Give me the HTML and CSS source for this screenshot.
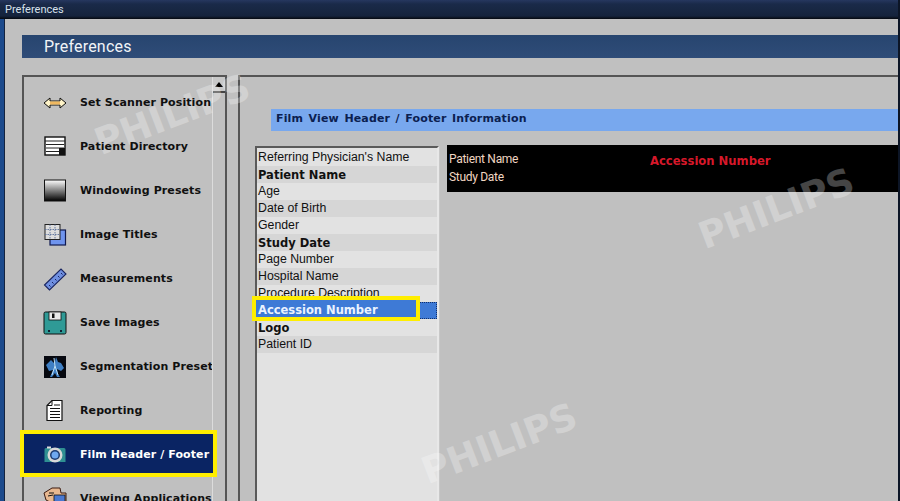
FILE: index.html
```html
<!DOCTYPE html>
<html lang="en">
<head>
<meta charset="utf-8">
<title>Preferences</title>
<link rel="stylesheet" href="styles.css">
</head>
<body>
<div class="window">
  <div class="titlebar">Preferences</div>
  <div class="client">
    <div class="banner">Preferences</div>
    <div class="panels">
      <aside class="nav">
        <ul class="nav-list">
          <li class="nav-item"><svg class="icon" viewBox="0 0 24 24"><path d="M1 12 7 7v3h10V7l6 5-6 5v-3H7v3z" fill="#fff4c8" stroke="#111" stroke-width="1"/><rect x="7" y="10.500" width="10" height="3" fill="#f0b860"/></svg><span>Set Scanner Position</span></li>
          <li class="nav-item"><svg class="icon" viewBox="0 0 24 24"><rect x="2" y="2" width="20" height="18" fill="#fff" stroke="#111" stroke-width="1.400"/><path d="M2 6h20M3 9.500h18M3 13h18M3 16.500h13" stroke="#222" stroke-width="1.200"/><rect x="16" y="13" width="6" height="7" fill="#111"/></svg><span>Patient Directory</span></li>
          <li class="nav-item"><svg class="icon" viewBox="0 0 24 24"><defs><linearGradient id="grad" x1="0" y1="0" x2="0" y2="1"><stop offset="0" stop-color="#fff"/><stop offset="1" stop-color="#000"/></linearGradient></defs><rect x="1.500" y="1" width="21" height="21" fill="url(#grad)" stroke="#111"/></svg><span>Windowing Presets</span></li>
          <li class="nav-item"><svg class="icon" viewBox="0 0 24 24"><rect x="7" y="7" width="15.500" height="15" fill="#6f94ee" stroke="#101a50" stroke-width="1.200"/><rect x="2" y="1.500" width="15" height="15" fill="#ddd" stroke="#222" stroke-width="1"/><path d="M2 6.500h15M2 11.500h15M7 1.500v15M12 1.500v15" stroke="#5a6f9a" stroke-width=".9" stroke-dasharray="1.500 1"/></svg><span>Image Titles</span></li>
          <li class="nav-item"><svg class="icon" viewBox="0 0 24 24"><path d="M1.500 18 18 2l5 5L6.500 23z" fill="#6f8fe0" stroke="#1a2560" stroke-width="1.100"/><path d="M6 18l1.500 1.500M9 15l1.500 1.500M12 12l1.500 1.500M15 9l1.500 1.500M18 6l1.500 1.500" stroke="#1a2560" stroke-width="1"/></svg><span>Measurements</span></li>
          <li class="nav-item"><svg class="icon" viewBox="0 0 24 24"><path d="M2.500 1h19a1.500 1.500 0 0 1 1.500 1.500v19a1.500 1.500 0 0 1-1.500 1.500h-19A1.500 1.500 0 0 1 1 21.500v-19A1.500 1.500 0 0 1 2.500 1z" fill="#2f9a96" stroke="#111"/><rect x="6" y="1" width="12" height="8" fill="#e8e8e8" stroke="#111" stroke-width=".8"/><rect x="9" y="2.500" width="2.500" height="4.500" fill="#111"/><rect x="5" y="19" width="2" height="2" fill="#123"/><rect x="17" y="19" width="2" height="2" fill="#123"/></svg><span>Save Images</span></li>
          <li class="nav-item"><svg class="icon" viewBox="0 0 24 24"><rect x="1" y="1" width="22" height="22" fill="#06080f"/><path d="M3 10 8 5l3 3 1-1 1-5 2 5 3 1 3 5-3 3-4-2 1 5 2 3h-3l-2-4-3 4H7l3-7-4 1z" fill="#3f7fc4"/><path d="M11 3l1 8-3 9M12 11l3 9" stroke="#bfe0f5" stroke-width="1" fill="none"/></svg><span>Segmentation Preset</span></li>
          <li class="nav-item"><svg class="icon" viewBox="0 0 24 24"><path d="M9 1.500h10v20H4V6.500z" fill="#fff" stroke="#111" stroke-width="1.200"/><path d="M9 1.500v5H4" fill="none" stroke="#111"/><path d="M11 6h6M7 9.500h10M7 12.500h10M7 15.500h10M7 18.500h10" stroke="#111" stroke-width="1"/></svg><span>Reporting</span></li>
          <li class="nav-item is-active"><svg class="icon" viewBox="0 0 24 24"><path d="M3 5h18a1.500 1.500 0 0 1 1.500 1.500V19H1.500V6.500A1.500 1.500 0 0 1 3 5z" fill="#2f8f92"/><rect x="4" y="3.500" width="4" height="2" fill="#ddd"/><circle cx="12" cy="12" r="7.500" fill="#d8d8d8"/><circle cx="12" cy="12" r="5" fill="#1c3a70"/><circle cx="12" cy="12" r="3.500" fill="#6fa8f0"/></svg><span>Film Header / Footer</span></li>
          <li class="nav-item"><svg class="icon" viewBox="0 0 24 24"><path d="M1 6 9 1h8l1 5 5 0v15H7v-6L3 13z" fill="#e8b890" stroke="#3b1a10" stroke-width="1"/><rect x="11" y="8" width="11" height="13" fill="#4a78d0" stroke="#111" stroke-width=".8"/><path d="M6 6l5 0M5 9l5-1" stroke="#111"/></svg><span>Viewing Applications</span></li>
        </ul>
        <div class="scrollbar"><button class="scroll-up" type="button" aria-label="Scroll up"></button></div>
      </aside>
      <main class="content">
        <h2 class="section-bar">Film View Header / Footer Information</h2>
        <div class="editor">
          <ul class="fields">
            <li class="field">Referring Physician's Name</li>
            <li class="field is-on">Patient Name</li>
            <li class="field">Age</li>
            <li class="field">Date of Birth</li>
            <li class="field">Gender</li>
            <li class="field is-on">Study Date</li>
            <li class="field">Page Number</li>
            <li class="field">Hospital Name</li>
            <li class="field">Procedure Description</li>
            <li class="field is-selected"><span class="field-mark">Accession Number</span></li>
            <li class="field is-on">Logo</li>
            <li class="field">Patient ID</li>
          </ul>
          <div class="preview">
            <div class="film-head">
              <div class="film-left"><div>Patient Name</div><div>Study Date</div></div>
              <div class="film-center">Accession Number</div>
            </div>
          </div>
        </div>
      </main>
    </div>
  </div>
  <div class="watermark wm-a">PHILIPS</div>
  <div class="watermark wm-b">PHILIPS</div>
  <div class="watermark wm-c">PHILIPS</div>
</div>
</body>
</html>
```
FILE: styles.css
```css
* { box-sizing: border-box; }
html, body { margin: 0; padding: 0; }
body { width: 900px; height: 501px; overflow: hidden; background: #c0c0c0; font-family: "DejaVu Sans", sans-serif; }
ul { list-style: none; margin: 0; padding: 0; }
.window { position: relative; width: 900px; height: 501px; overflow: hidden; display: flex; flex-direction: column; background: #1c4a8c; border-right: 2px solid #0c1526; }
.titlebar { flex: none; height: 19px; padding: 3px 0 0 5px; color: #d6e0ea; font: 11px/14px "Roboto", sans-serif; background: linear-gradient(#26375f 0, #1a2a49 4px, #15233c 16px, #05080f 19px); }
.client { flex: 1; min-height: 0; margin-left: 4px; background: #c0c0c0; padding: 16px 0 0 18px; border-left: 1px solid #14233f; }
.banner { height: 23px; margin-left: -1px; padding: 1px 0 0 22px; background: linear-gradient(#27456f, #2f4c78); color: #f1f4f7; font: 16px/22px "Roboto", sans-serif; letter-spacing: .2px; }
.panels { display: flex; gap: 11px; margin-top: 17px; height: 426px; margin-left: -1px; }
.nav { position: relative; flex: none; width: 205px; height: 440px; border: solid #555; border-width: 2px 2px 0 2px; }
.nav-list { position: relative; z-index: 1; padding-top: 4px; }
.nav-item { display: flex; align-items: center; height: 44px; padding-left: 19px; width: 188px; white-space: nowrap; overflow: hidden; font: 700 11px/16px "DejaVu Sans", sans-serif; color: #101010; letter-spacing: .1px; }
.nav-item .icon { flex: none; width: 24px; height: 24px; margin-right: 13px; }
.nav-item.is-active { background: #0a2463; color: #fff; width: 197px; height: 47px; margin: -3px 0 0 -4px; padding: 2px 0 0 19px; border: 4px solid #ffee00; }
.scrollbar { position: absolute; top: 0; right: 0; width: 13px; bottom: 0; border-left: 1px solid #dcdcdc; }
.scroll-up { display: block; width: 12px; height: 16px; padding: 0; background: #c8c8c8; border: 0; border-bottom: 2px solid #444; position: relative; }
.scroll-up::before { content: ""; position: absolute; left: 2px; top: 5px; border: 4px solid transparent; border-top: 0; border-bottom: 5px solid #000; }
.content { flex: 1; min-width: 0; height: 440px; border: solid #555; border-width: 2px 0 0 2px; padding-top: 32px; }
.section-bar { margin: 0 0 0 31px; height: 22px; padding: 1px 0 0 5px; background: #78a8ee; color: #0b2050; font: 700 11px/18px "DejaVu Sans", sans-serif; letter-spacing: .15px; word-spacing: 1.500px; }
.editor { display: flex; margin: 14px 0 0 15px; align-items: flex-start; }
.fields { flex: none; width: 184px; height: 360px; margin-top: 1px; background: #e2e2e2; border: 2px solid #5a5a5a; border-right-color: #e8e8e8; border-bottom: 0; padding-top: 1px; margin-right: 8px; box-shadow: 1px 0 0 #c8c8c8; }
.field { height: 17px; padding-left: 1px; color: #111; font: 12.300px/16px "Liberation Sans", sans-serif; white-space: nowrap; }
.field:nth-child(even) { background: #d6d6d6; }
.field.is-on { font: 700 11.500px/18px "DejaVu Sans", sans-serif; }
.field.is-selected { position: relative; background: #3e7ad6; color: #eaf2ff; padding: 0; z-index: 1; outline: 1px dotted #12306a; outline-offset: -1px; }
.field-mark { position: absolute; left: -5px; top: -6px; width: 168px; height: 25px; padding-left: 2px; border: 4px solid #ffee00; background: #3e7ad6; font: 700 11.500px/21px "DejaVu Sans", sans-serif; }
.preview { flex: 1; min-width: 0; height: 380px; }
.film-head { display: flex; height: 47px; background: #000; }
.film-left { width: 203px; padding: 5px 0 0 2px; color: #f0d6c2; font: 12px/18px "Roboto", sans-serif; letter-spacing: -.3px; }
.film-center { color: #d6182a; font: 700 11.600px/32px "DejaVu Sans", sans-serif; }
.watermark { position: absolute; color: #fff; font: 700 37px/42px "DejaVu Sans", sans-serif; transform: rotate(-21deg); transform-origin: 0 100%; white-space: nowrap; opacity: .27; pointer-events: none; }
.wm-a { left: 104px; top: 122px; }
.wm-b { left: 708px; top: 216px; }
.wm-c { left: 431px; top: 451px; }
```
